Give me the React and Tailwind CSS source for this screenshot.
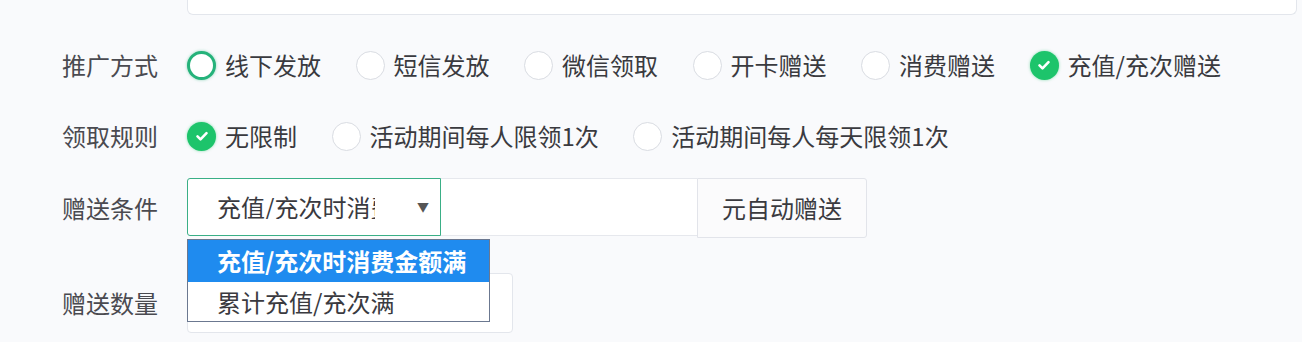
import React from "react";

const FONT = { fontFamily: '"Noto Sans CJK SC", "Noto Sans", sans-serif' };

function Radio({ state }) {
  // state: "off" | "focus" | "on"
  if (state === "on") {
    return (
      <span className="flex h-[29px] w-[29px] shrink-0 items-center justify-center rounded-full bg-[#1dc46b] shadow-[0_0_3px_rgba(29,196,107,0.5)]">
        <svg width="16" height="16" viewBox="0 0 16 16" fill="none">
          <path d="M3.5 8.3l3 3 6-6.2" stroke="#fff" strokeWidth="2.6" strokeLinecap="round" strokeLinejoin="round" />
        </svg>
      </span>
    );
  }
  if (state === "focus") {
    return <span className="h-[29px] w-[29px] shrink-0 rounded-full border-[3px] border-[#25b27a] bg-white shadow-[0_0_3px_rgba(37,178,122,0.5)]" />;
  }
  return <span className="h-[29px] w-[29px] shrink-0 rounded-full border border-[#d9dce2] bg-white" />;
}

function RadioGroup({ items }) {
  return (
    <div className="flex items-center">
      {items.map((it) => (
        <div key={it.text} className="mr-[34.5px] flex items-center">
          <Radio state={it.state} />
          <span className="ml-[9px] whitespace-nowrap text-[24px] leading-none text-[#3a3a3f]">{it.text}</span>
        </div>
      ))}
    </div>
  );
}

function Label({ children }) {
  return <div className="w-[125px] shrink-0 text-[24px] leading-none text-[#4a4a50]">{children}</div>;
}

export default function App() {
  const ways = [
    { text: "线下发放", state: "focus" },
    { text: "短信发放", state: "off" },
    { text: "微信领取", state: "off" },
    { text: "开卡赠送", state: "off" },
    { text: "消费赠送", state: "off" },
    { text: "充值/充次赠送", state: "on" },
  ];
  const rules = [
    { text: "无限制", state: "on" },
    { text: "活动期间每人限领1次", state: "off" },
    { text: "活动期间每人每天限领1次", state: "off" },
  ];

  return (
    <div className="h-[342px] w-[1302px] overflow-hidden bg-[#f9fafc] pl-[62px]" style={FONT}>
      {/* previous field (cut off at top) */}
      <div className="ml-[125px] h-[15px] w-[1110px] rounded-b-md border-x border-b border-[#e3e6ec] bg-white" />

      <div className="mt-[30px] flex h-[40px] items-center">
        <Label>推广方式</Label>
        <RadioGroup items={ways} />
      </div>

      <div className="mt-[31px] flex h-[40px] items-center">
        <Label>领取规则</Label>
        <RadioGroup items={rules} />
      </div>

      <div className="mt-[22px] flex items-center">
        <Label>赠送条件</Label>
        <div className="relative flex">
          <div className="flex h-[58px] w-[254px] items-center rounded-l-[3px] border border-[#3aaf86] bg-white pl-[29px] pr-[11px]">
            <span className="w-[158px] overflow-hidden whitespace-nowrap text-[24px] leading-none text-[#3a3a3f]">充值/充次时消费</span>
            <span className="ml-auto text-[12px] leading-none text-[#555]">▼</span>
          </div>
          <div className="h-[58px] w-[256px] border-y border-[#e6e8ed] bg-white" />
          <div className="flex h-[60px] w-[170px] items-center justify-center rounded-r-[3px] border border-[#e2e4ea] bg-[#fbfbfc] text-[24px] leading-none text-[#3a3a3f]">
            元自动赠送
          </div>

          {/* open dropdown list */}
          <div className="absolute left-0 top-[61px] z-10 w-[303px] border border-[#6b7890] bg-white">
            <div className="flex h-[42px] items-center bg-[#1f8bef] pl-[29px] text-[24px] font-bold leading-none text-white whitespace-nowrap">
              充值/充次时消费金额满
            </div>
            <div className="flex h-[39px] items-center pl-[29px] text-[24px] leading-none text-[#3a3a3f] whitespace-nowrap">
              累计充值/充次满
            </div>
          </div>
        </div>
      </div>

      <div className="mt-[35px] flex items-center">
        <Label>赠送数量</Label>
        <div className="h-[60px] w-[326px] rounded-[4px] border border-[#e3e6ec] bg-white" />
      </div>
    </div>
  );
}
